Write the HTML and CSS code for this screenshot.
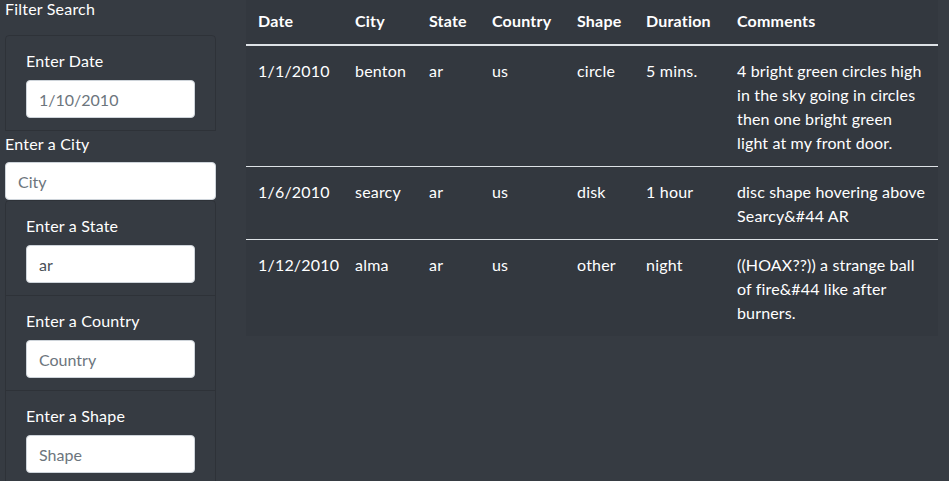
FILE: index.html
```html
<!DOCTYPE html>
<html lang="en">
<head>
<meta charset="utf-8">
<title>UFO Sightings</title>
<link rel="stylesheet" href="styles.css">
</head>
<body>
<div class="page">
  <aside class="sidebar">
    <label class="title">Filter Search</label>
    <ul class="filters">
      <li class="filter-item">
        <label class="field-label" for="datetime">Enter Date</label>
        <input class="field" id="datetime" type="text" placeholder="1/10/2010">
      </li>
    </ul>
    <label class="city-label" for="city">Enter a City</label>
    <input class="field" id="city" type="text" placeholder="City">
    <ul class="filters">
      <li class="filter-item">
        <label class="field-label" for="state">Enter a State</label>
        <input class="field" id="state" type="text" value="ar" placeholder="State">
      </li>
      <li class="filter-item">
        <label class="field-label" for="country">Enter a Country</label>
        <input class="field" id="country" type="text" placeholder="Country">
      </li>
      <li class="filter-item">
        <label class="field-label" for="shape">Enter a Shape</label>
        <input class="field" id="shape" type="text" placeholder="Shape">
      </li>
    </ul>
  </aside>
  <main class="results">
    <table class="ufo-table">
      <colgroup>
        <col class="c-date"><col class="c-city"><col class="c-state"><col class="c-country"><col class="c-shape"><col class="c-duration"><col class="c-comments">
      </colgroup>
      <thead>
        <tr><th>Date</th><th>City</th><th>State</th><th>Country</th><th>Shape</th><th>Duration</th><th>Comments</th></tr>
      </thead>
      <tbody>
        <tr><td>1/1/2010</td><td>benton</td><td>ar</td><td>us</td><td>circle</td><td>5 mins.</td><td class="comment">4 bright green circles high in the sky going in circles then one bright green light at my front door.</td></tr>
        <tr><td>1/6/2010</td><td>searcy</td><td>ar</td><td>us</td><td>disk</td><td>1 hour</td><td class="comment">disc shape hovering above Searcy&amp;#44 AR</td></tr>
        <tr><td>1/12/2010</td><td>alma</td><td>ar</td><td>us</td><td>other</td><td>night</td><td class="comment">((HOAX??)) a strange ball of fire&amp;#44 like after burners.</td></tr>
      </tbody>
    </table>
  </main>
</div>
</body>
</html>
```
FILE: styles.css
```css
* { box-sizing: border-box; }
html, body { margin: 0; padding: 0; }
body {
  background: #363b42;
  color: #fff;
  font-family: Lato, "Open Sans", sans-serif;
  font-size: 16px;
  line-height: 24px;
  letter-spacing: 0.2px;
  overflow: hidden;
  height: 481px;
}
.page {
  display: flex;
  align-items: flex-start;
  gap: 30px;
  margin-top: -4px;
  padding-left: 5px;
}
.sidebar {
  width: 211px;
  flex: none;
  display: flex;
  flex-direction: column;
}
.title {
  display: block;
  margin-bottom: 15px;
  padding-top: 1px;
  line-height: 23px;
}
.filters {
  list-style: none;
  margin: 0;
  padding: 0;
}
.filter-item {
  border: 1px solid rgba(0, 0, 0, 0.14);
  padding: 12px 20px;
  display: flex;
  flex-direction: column;
}
.filter-item + .filter-item { border-top-width: 0; }
.filter-item:first-child { border-radius: 4px 4px 0 0; }
.field-label {
  display: block;
  margin-bottom: 8px;
  padding-top: 1px;
  line-height: 23px;
}
.city-label {
  display: block;
  margin-bottom: 7px;
  padding-top: 1px;
  line-height: 23px;
}
.field {
  display: block;
  width: 100%;
  height: 38px;
  padding: 6px 12px;
  font: inherit;
  line-height: 24px;
  color: #495057;
  background: #fff;
  border: 1px solid #ced4da;
  border-radius: 4px;
}
.field::placeholder { color: #6c757d; opacity: 1; }
.results { flex: none; }
.ufo-table {
  width: 692px;
  table-layout: fixed;
  border-collapse: collapse;
  background: #33383f;
  color: #fff;
}
.c-date { width: 97px; }
.c-city { width: 74px; }
.c-state { width: 63px; }
.c-country { width: 85px; }
.c-shape { width: 69px; }
.c-duration { width: 91px; }
.c-comments { width: 213px; }
.ufo-table th,
.ufo-table td {
  padding: 13px 12px 11px;
  text-align: left;
  vertical-align: top;
}
.ufo-table th {
  font-weight: 700;
  border-bottom: 2px solid #dee2e6;
}
.ufo-table td.comment { letter-spacing: 0.15px; }
.ufo-table tbody tr + tr td { border-top: 1px solid #dee2e6; }
```
